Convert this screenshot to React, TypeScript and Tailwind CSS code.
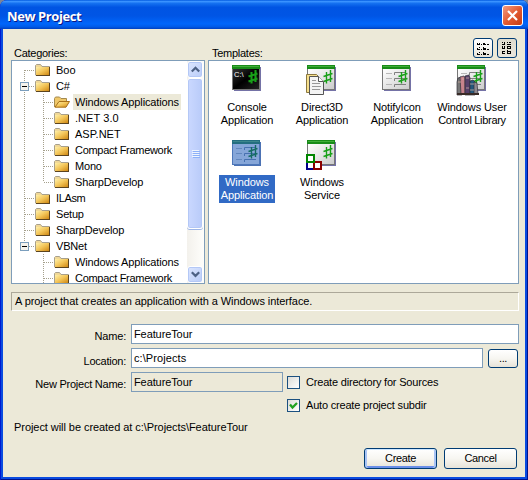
import type { ReactNode } from "react";

type FolderRow = { label: string; level: 0 | 1; expander?: boolean; selected?: boolean; last?: boolean; spacing: string };

const rows: FolderRow[] = [
  { label: "Boo", level: 0, spacing: "tracking-[0px]" },
  { label: "C#", level: 0, expander: true, spacing: "tracking-[-0.3px]" },
  { label: "Windows Applications", level: 1, selected: true, spacing: "tracking-[-0.12px]" },
  { label: ".NET 3.0", level: 1, spacing: "tracking-[0.06px]" },
  { label: "ASP.NET", level: 1, spacing: "tracking-[0px]" },
  { label: "Compact Framework", level: 1, spacing: "tracking-[-0.3px]" },
  { label: "Mono", level: 1, spacing: "tracking-[-0.2px]" },
  { label: "SharpDevelop", level: 1, last: true, spacing: "tracking-[-0.12px]" },
  { label: "ILAsm", level: 0, spacing: "tracking-[-0.35px]" },
  { label: "Setup", level: 0, spacing: "tracking-[-0.2px]" },
  { label: "SharpDevelop", level: 0, spacing: "tracking-[-0.12px]" },
  { label: "VBNet", level: 0, expander: true, last: true, spacing: "tracking-[-0.2px]" },
  { label: "Windows Applications", level: 1, spacing: "tracking-[-0.12px]" },
  { label: "Compact Framework", level: 1, spacing: "tracking-[-0.3px]" },
];

function Folder({ open }: { open?: boolean }) {
  return (
    <svg width="16" height="16" viewBox="0 0 16 16" className="shrink-0">
      {open ? (
        <>
          <path d="M.5 13V4.500l1-1.500h4l1.500 1.500h5.500v3" fill="#f0c86a" stroke="#a48a50" />
          <path d="M1 13.200L5 7.500h10.500L12 13.200z" fill="url(#folderFill)" stroke="#a8701a" strokeWidth="1" />
        </>
      ) : (
        <>
          <path d="M.5 13V3.500L1.500 2.500h4L7 4.500h7.500V13z" fill="#f0d898" stroke="#a8a08c" />
          <rect x="1" y="5" width="13" height="8" fill="url(#folderFill)" />
          <path d="M1 13.500h14M14.500 5v8" fill="none" stroke="#5b4420" />
        </>
      )}
    </svg>
  );
}

function TreeRow({ row, index }: { row: FolderRow; index: number }) {
  const child = row.level === 1;
  return (
    <div className="flex h-4 shrink-0 items-center">
      <svg width={child ? 42 : 23} height="16" className="shrink-0" shapeRendering="crispEdges">
        <g stroke="#a5a08c" strokeDasharray="1 1" fill="none">
          {index < 11 && <path d={index === 0 ? "M12.500 8v8" : "M12.500 0v16"} />}
          {index === 11 && <path d="M12.500 0v8" />}
          {child && <path d={row.last ? "M31.500 0v8" : "M31.500 0v16"} />}
          <path d={child ? "M32 8.500h10" : "M13 8.500h10"} />
        </g>
        {row.expander && (
          <>
            <rect x="8.500" y="4.500" width="8" height="8" fill="#f4f2ec" stroke="#7b9ebd" />
            <path d="M10 8.500h5" stroke="#000" />
          </>
        )}
      </svg>
      <Folder open={row.selected} />
      <span className={`ml-[3px] flex h-4 items-center whitespace-nowrap px-[2px] ${row.selected ? "bg-[#ece9d8]" : ""} ${row.spacing}`}>{row.label}</span>
    </div>
  );
}

function ScrollButton({ down }: { down?: boolean }) {
  return (
    <div className="flex h-[17px] w-[16px] shrink-0 items-center justify-center rounded-[3px] border border-white bg-linear-to-br from-[#dce6ff] to-[#b9ccf8] shadow-[inset_0_0_0_1px_#b4c8f6]">
      <svg width="9" height="7" viewBox="0 0 9 7">
        <path d={down ? "M.8 1.200l3.700 3.700 3.700-3.700" : "M.8 5.500l3.700-3.700 3.700 3.700"} fill="none" stroke="#4d6185" strokeWidth="2.200" />
      </svg>
    </div>
  );
}

function Sharp({ color, bold }: { color: string; bold?: boolean }) {
  return <path d="M20.500 8v11.500M24.500 6v12M17.500 12.500l9-3M17.500 17.500l9-3" fill="none" stroke={color} strokeWidth={bold ? 2.1 : 1.4} />;
}

function WindowIcon({ kind }: { kind: string }) {
  const dark = kind === "console";
  const sel = kind === "selected";
  return (
    <svg width="32" height="32" viewBox="0 0 32 32">
      <rect x="3" y="3" width="27" height="24" fill={sel ? "#4c72b4" : "#7472a6"} />
      <rect x="1" y="1" width="28" height="25" fill={sel ? "#4d77b9" : "#777"} />
      <rect x="2" y="5" width="26" height="20" fill={dark ? "url(#darkFill)" : sel ? "#86a6d8" : "url(#paperFill)"} />
      <rect x="1" y="1" width="28" height="4" fill={sel ? "#246e80" : "#188c18"} />
      <path d="M2 2.500h26" stroke={sel ? "#3c868c" : "#40ad38"} />
      {dark && <text x="3" y="13" fontSize="7.500" fill="#fff" fontFamily="Liberation Sans, sans-serif">C:\</text>}
      {(kind === "notify" || sel || kind === "library") && (
        <g fill={sel ? "#9db6df" : "#fff"} stroke={sel ? "#4771b0" : "#808080"}>
          <path d="M5 9.500h6M5 14.500h6M5 20.500h6" stroke={sel ? "#6287bd" : "#b8b8b8"} />
          <path d="M13.500 11V8.500H24M13.500 17v-2.500H24M13.500 23v-2.500H25" fill="none" />
        </g>
      )}
      <Sharp color={sel ? "#146b63" : "#18a018"} bold={dark} />
      {kind === "direct" && (
        <g>
          <path d="M.5 10.500h10l3 3v15H.5z" fill="#f6df8d" stroke="#8b783f" />
          <path d="M3.500 12.500h9l5 5v13h-14z" fill="#f4f4f4" stroke="#555" />
          <path d="M12.500 12.500v5h5" fill="#fff" stroke="#555" />
          <path d="M6 16.500h4M6 19.500h8M6 22.500h9M6 25.500h8" stroke="#999" />
        </g>
      )}
      {kind === "service" && (
        <g strokeWidth="2">
          <rect x="1" y="23" width="7" height="7" fill="#fff" stroke="#00008b" />
          <rect x="8" y="23" width="7" height="7" fill="#fff" stroke="#8b0000" />
          <rect x="1" y="16" width="7" height="7" fill="#fff" stroke="#008500" />
        </g>
      )}
      {kind === "library" && (
        <g stroke="#302e38" strokeWidth=".7">
          <path d="M1 18l1-4 3-1 1 3v15H1z" fill="#777" />
          <path d="M4 13l4-1 1 2v16H5z" fill="#c8838c" />
          <path d="M9 12l4-1 1 3v17H9z" fill="#57406a" />
          <path d="M14 17l3-1 2 2v13h-5z" fill="#24577c" />
          <path d="M18 18l3 1 1 11h-4z" fill="#8f8991" />
          <path d="M2 18h3M6 15h2M10 14h3M10 24h3M14 20h4M14 26h4" stroke="#ddb8a8" />
          <path d="M1 30h22" stroke="#392b27" strokeWidth="2" />
        </g>
      )}
    </svg>
  );
}

function Template({ kind, lines, selected }: { kind: string; lines: string[]; selected?: boolean }) {
  return (
    <div className="flex h-[75px] w-[75px] flex-col items-center">
      <WindowIcon kind={kind} />
      <div className={`ml-px mt-[4px] flex h-[28px] flex-col items-center px-[2px] pt-px leading-[13px] tracking-[-0.12px] whitespace-nowrap ${selected ? "bg-[#316ac5] text-white" : ""}`}>
        {lines.map((l) => <span key={l} className={l === "Control Library" ? "tracking-[-0.3px]" : ""}>{l}</span>)}
      </div>
    </div>
  );
}

function Button({ children, className }: { children: ReactNode; className: string }) {
  return <button className={`flex items-center justify-center rounded-[3px] border border-[#003c74] bg-linear-to-b tracking-[-0.35px] ${className}`}>{children}</button>;
}

function Check({ checked, children }: { checked?: boolean; children: ReactNode }) {
  return (
    <label className="flex h-[13px] items-center gap-[6px] tracking-[-0.19px] whitespace-nowrap">
      <span className="flex size-[13px] items-center justify-center border border-[#1c5180] bg-linear-to-br from-[#dcdcd7] to-white">
        {checked && <svg width="9" height="9" viewBox="0 0 9 9"><path d="M1 3.500L3.500 6.500 8 2" fill="none" stroke="#21a121" strokeWidth="2.300" /></svg>}
      </span>
      <span>{children}</span>
    </label>
  );
}

function ViewGlyph({ list }: { list?: boolean }) {
  return (
    <svg width="13" height="13" viewBox="0 0 13 13" shapeRendering="crispEdges">
      {list ? (
        <path d="M1 0h1v1H1zM3 0h1v3H1V2h2zM6 0h1v1H6zM8 0h2v1H8zM6 2h4v1H6zM1 4h1v3H1zM3 4h1v3H1V6h2zM6 4h1v3H6zM7 4h3v1H7zM9 5h1v2H7V6h2zM1 9h3v1H2v1h2v1H1zM6 8h1v4H6zM7 9h3v3H7v-1h2v-1H7z" />
      ) : (
        <path d="M0 1h1v1h2v1H0zM2 1h1v1H2zM4 2h1v1H4zM6 1h2v1h1v1H6zM10 2h2v1h-2zM0 6h1v1h2v1H0zM2 5h1v1H2zM4 7h1v1H4zM6 5h1v1h2v2H6zM10 7h2v1h-2zM0 11h1v1h2v1H0zM2 10h1v1H2zM4 12h1v1H4zM6 10h1v1h2v2H6zM10 12h2v1h-2z" />
      )}
    </svg>
  );
}

export default function App() {
  return (
    <div className="flex h-[480px] w-[528px] flex-col overflow-hidden bg-[#7b8598] text-[11px] leading-[13px] text-black [font-family:'Liberation_Sans',Arial,sans-serif]">
      <svg width="0" height="0" className="absolute">
        <defs>
          <linearGradient id="folderFill" x2="1" y2="1"><stop stopColor="#fff0a8" /><stop offset=".5" stopColor="#f3c558" /><stop offset="1" stopColor="#cf8814" /></linearGradient>
          <linearGradient id="darkFill" x2="1" y2="1"><stop stopColor="#333" /><stop offset=".5" stopColor="#000" /><stop offset="1" stopColor="#222" /></linearGradient>
          <linearGradient id="paperFill" x2="1" y2="1"><stop stopColor="#fff" /><stop offset="1" stopColor="#ccc" /></linearGradient>
        </defs>
      </svg>
      <div className="flex h-full flex-col overflow-hidden rounded-t-[7px] bg-[#0a4be0] shadow-[inset_1px_0_#0019cf,inset_-1px_-1px_#00138c]">
        <header className="flex h-[29px] shrink-0 items-center justify-between bg-[linear-gradient(to_bottom,#0058e0_0%,#3a93ff_5%,#1470f0_12%,#0054e3_25%,#0055e5_55%,#0066fb_82%,#005be8_92%,#0040c0_100%)] pl-[7px] pr-[5px]">
          <h1 className="pt-[3px] text-[13px] font-bold tracking-[-0.42px] text-white [font-family:'Open_Sans',sans-serif] [text-shadow:1px_1px_#0a1883]">New Project</h1>
          <button className="mt-[2px] flex size-[21px] items-center justify-center rounded-[3px] border border-white bg-linear-to-br from-[#f09a80] via-[#e35b32] to-[#c53b12]">
            <svg width="13" height="13" viewBox="0 0 13 13"><path d="M2 2l9 9M11 2l-9 9" stroke="#fff" strokeWidth="2.200" /></svg>
          </button>
        </header>
        <main className="mx-[3px] mb-[3px] flex flex-1 flex-col bg-[#ece9d8] pl-[8px] pr-[6px]">
          <div className="flex h-[31px] shrink-0 tracking-[-0.27px]">
            <span className="w-[198px] pl-[3px] pt-[18px]">Categories:</span>
            <span className="pl-[3px] pt-[18px]">Templates:</span>
            <div className="ml-auto mr-[2px] mt-[9px] flex gap-[4px]">
              <Button className="size-[20px] from-white via-[#f7f6f1] to-[#e7e3d8]"><ViewGlyph /></Button>
              <Button className="size-[20px] from-[#dfdccf] via-[#e5e1d5] to-[#e9e6dc]"><ViewGlyph list /></Button>
            </div>
          </div>
          <div className="flex h-[224px] shrink-0 gap-[3px]">
            <section className="flex w-[194px] border border-[#7f9db9] bg-white">
              <div className="flex flex-1 flex-col overflow-hidden pt-[1px]">
                {rows.map((r, i) => <TreeRow key={i} row={r} index={i} />)}
              </div>
              <div className="flex w-[17px] flex-col items-start bg-linear-to-r from-[#f3f1ec] to-[#fefefb]">
                <ScrollButton />
                <div className="flex h-[151px] w-[16px] shrink-0 flex-col items-center justify-center gap-px rounded-[3px] border border-white bg-linear-to-r from-[#cad8ff] to-[#b9cbf9] shadow-[inset_0_0_0_1px_#b4c8f6,0_1px_#9db5e6]">
                  {[0, 1, 2, 3].map((n) => <i key={n} className="h-px w-[7px] bg-[#eef4fe] shadow-[1px_1px_#8cb0f8]" />)}
                </div>
                <div className="flex-1" />
                <ScrollButton down />
              </div>
            </section>
            <section className="flex flex-1 flex-wrap content-start border border-[#7f9db9] bg-white pt-[3px]">
              <Template kind="console" lines={["Console", "Application"]} />
              <Template kind="direct" lines={["Direct3D", "Application"]} />
              <Template kind="notify" lines={["NotifyIcon", "Application"]} />
              <Template kind="library" lines={["Windows User", "Control Library"]} />
              <Template kind="selected" selected lines={["Windows", "Application"]} />
              <Template kind="service" lines={["Windows", "Service"]} />
            </section>
          </div>
          <div className="mt-[8px] flex h-[19px] shrink-0 items-center border border-t-[#aca899] border-r-white border-b-white border-l-[#aca899] pl-[3px] tracking-[-0.075px]">A project that creates an application with a Windows interface.</div>
          <div className="mt-[13px] flex h-[20px] shrink-0">
            <span className="w-[120px] pr-[5px] pt-[6px] text-right tracking-[-0.2px]">Name:</span>
            <div className="flex flex-1 items-center border border-[#7f9db9] bg-white pl-[2px] tracking-[-0.1px]">FeatureTour</div>
          </div>
          <div className="mt-[4px] flex h-[20px] shrink-0">
            <span className="w-[120px] pr-[5px] pt-[7px] text-right tracking-[-0.25px]">Location:</span>
            <div className="flex w-[352px] items-center border border-[#7f9db9] bg-white pl-[2px] tracking-[0.08px]">c:\Projects</div>
            <Button className="ml-[5px] mt-px h-[19px] w-[30px] from-white via-[#f7f6f1] to-[#e7e3d8]">...</Button>
          </div>
          <div className="mt-[4px] flex h-[40px] shrink-0">
            <span className="w-[120px] pr-[5px] pt-[6px] text-right tracking-[-0.24px]">New Project Name:</span>
            <div className="flex h-[20px] w-[152px] items-center border border-[#7f9db9] pl-[2px] tracking-[-0.1px]">FeatureTour</div>
            <div className="ml-[4px] mt-[4px] flex flex-col gap-[10px]">
              <Check>Create directory for Sources</Check>
              <Check checked>Auto create project subdir</Check>
            </div>
          </div>
          <p className="mt-[9px] pl-[3px] tracking-[-0.06px]">Project will be created at c:\Projects\FeatureTour</p>
          <div className="mt-[14px] flex justify-end gap-[7px] pr-[2px]">
            <Button className="h-[21px] w-[73px] from-white via-[#f7f6f1] to-[#e7e3d8] shadow-[inset_0_1px_#cee7ff,inset_2px_0_#a9c4f5,inset_-2px_0_#a9c4f5,inset_0_-2px_#698ee8]">Create</Button>
            <Button className="h-[21px] w-[73px] from-white via-[#f7f6f1] to-[#e7e3d8]">Cancel</Button>
          </div>
        </main>
      </div>
    </div>
  );
}
